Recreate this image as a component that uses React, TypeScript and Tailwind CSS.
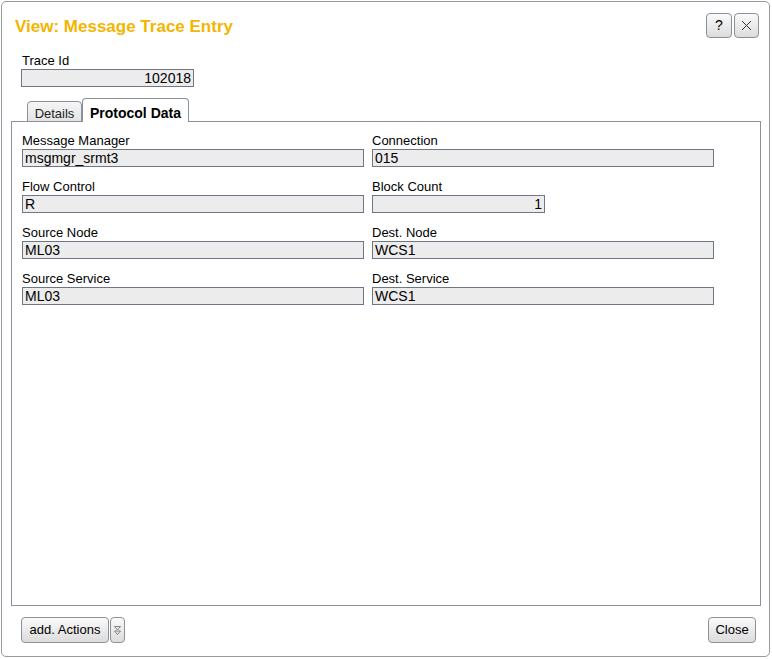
const fieldCls =
  "h-[18px] border border-[#6f7685] bg-[#ececec] text-[14px] leading-[16px] text-black px-[2px]";

type Field = { label: string; value: string; short?: boolean; right?: boolean };

const fields: Field[] = [
  { label: "Message Manager", value: "msgmgr_srmt3" },
  { label: "Connection", value: "015" },
  { label: "Flow Control", value: "R" },
  { label: "Block Count", value: "1", short: true, right: true },
  { label: "Source Node", value: "ML03" },
  { label: "Dest. Node", value: "WCS1" },
  { label: "Source Service", value: "ML03" },
  { label: "Dest. Service", value: "WCS1" },
];

const btnCls =
  "h-[26px] border border-[#8d9096] rounded-[4px] bg-gradient-to-b from-[#fafafa] to-[#dcdcdc] text-[13px] text-black flex items-center justify-center";

const App = () => {
  return (
    <div
      className="w-[772px] h-[659px] bg-white pt-px pl-px"
      style={{ fontFamily: '"Liberation Sans", Arial, sans-serif' }}
    >
      <div className="w-[769px] h-[656px] border border-[#959aa3] rounded-[5px] flex flex-col">
        {/* header */}
        <div className="h-[36px] flex justify-between items-start">
          <div className="mt-[15px] pl-[13px] text-[17px] leading-[20px] font-bold text-[#f3b500]">
            View: Message Trace Entry
          </div>
          <div className="mt-[11px] mr-[10px] flex gap-[2px]">
            <button className={`${btnCls} w-[26px] !h-[25px] text-[14px]`}>?</button>
            <button className={`${btnCls} w-[25px] !h-[25px]`}>
              <svg width="11" height="11" viewBox="0 0 11 11">
                <path d="M1 1 L10 10 M10 1 L1 10" stroke="#333" strokeWidth="1" />
              </svg>
            </button>
          </div>
        </div>

        {/* trace id */}
        <div className="pt-[16px] pl-[19px]">
          <div className="text-[13px] leading-[14px] pb-px text-black pl-px">Trace Id</div>
          <div className={`${fieldCls} w-[173px] text-right`}>102018</div>
        </div>

        {/* tabs */}
        <div className="ml-[9px] mt-[11px] w-[750px]">
          <div className="flex items-end ml-[16px] -mb-px relative z-10">
            <div className="h-[21px] w-[55px] border border-[#8c909a] rounded-t-[4px] bg-gradient-to-b from-[#f6f6f6] to-[#e4e4e4] text-[13px] leading-[14px] text-[#222] text-center pt-[5px]">
              Details
            </div>
            <div className="h-[24px] w-[107px] border border-b-0 border-[#8c909a] rounded-t-[4px] bg-white text-[14px] leading-[16px] font-bold text-black text-center pt-[6px]">
              Protocol Data
            </div>
          </div>
          <div className="h-[485px] border border-[#8c909a] pt-[12px] pl-[10px]">
            <div className="grid grid-cols-[342px_342px] gap-x-[8px] gap-y-[13px]">
              {fields.map((f) => (
                <div key={f.label}>
                  <div className="text-[13px] leading-[14px] pb-px text-black">{f.label}</div>
                  <div
                    className={`${fieldCls} ${f.short ? "w-[173px]" : "w-[342px]"} ${
                      f.right ? "text-right" : ""
                    }`}
                  >
                    {f.value}
                  </div>
                </div>
              ))}
            </div>
          </div>
        </div>

        {/* footer */}
        <div className="mt-[11px] pl-[19px] pr-[13px] flex justify-between">
          <div className="flex gap-px">
            <button className={`${btnCls} w-[88px]`}>add. Actions</button>
            <button className={`${btnCls} w-[15px]`}>
              <svg width="7" height="11" viewBox="0 0 7 11">
                <path d="M0.5 1.5 H6.5 L3.5 5 Z M0.5 6 H6.5 L3.5 9.5 Z" fill="none" stroke="#777" strokeWidth="0.9" />
              </svg>
            </button>
          </div>
          <button className={`${btnCls} w-[48px]`}>Close</button>
        </div>
      </div>
    </div>
  );
};

export default App;
